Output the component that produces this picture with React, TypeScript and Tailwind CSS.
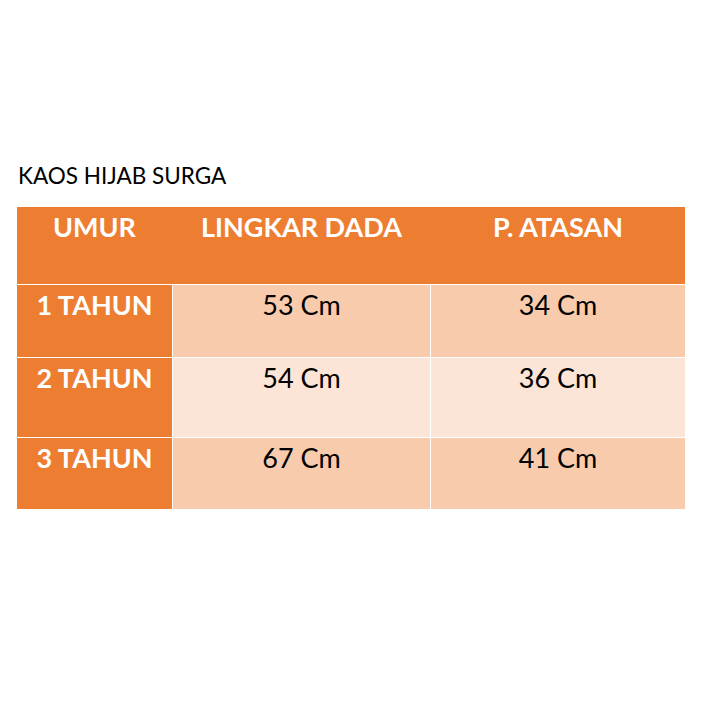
const rows = [
  { age: "1 TAHUN", dada: "53 Cm", atasan: "34 Cm", bg: "bg-[#f8cbad]", h: "h-[72px]" },
  { age: "2 TAHUN", dada: "54 Cm", atasan: "36 Cm", bg: "bg-[#fce4d6]", h: "h-[79px]" },
  { age: "3 TAHUN", dada: "67 Cm", atasan: "41 Cm", bg: "bg-[#f8cbad]", h: "h-[71px]" },
];

export default function App() {
  return (
    <div className="w-[704px] h-[704px] bg-white font-['Lato','Liberation_Sans',sans-serif] text-black">
      <div className="pt-[161px] pl-[18px] text-[22.5px] leading-[30px]">KAOS HIJAB SURGA</div>
      <div className="mt-[16px] ml-[17px] w-[668px] flex flex-col gap-px bg-white">
        <div className="grid grid-cols-[155px_257px_254px] gap-px bg-[#ed7d31] h-[77px] text-white font-bold text-[27px] leading-[36px] pt-[2px] text-center">
          <div>UMUR</div>
          <div>LINGKAR DADA</div>
          <div>P. ATASAN</div>
        </div>
        {rows.map((r) => (
          <div key={r.age} className={`grid grid-cols-[155px_257px_254px] gap-px text-[27px] leading-[36px] text-center ${r.h}`}>
            <div className="bg-[#ed7d31] text-white font-bold pt-[2px]">{r.age}</div>
            <div className={`${r.bg} pt-[2px]`}>{r.dada}</div>
            <div className={`${r.bg} pt-[2px]`}>{r.atasan}</div>
          </div>
        ))}
      </div>
    </div>
  );
}
